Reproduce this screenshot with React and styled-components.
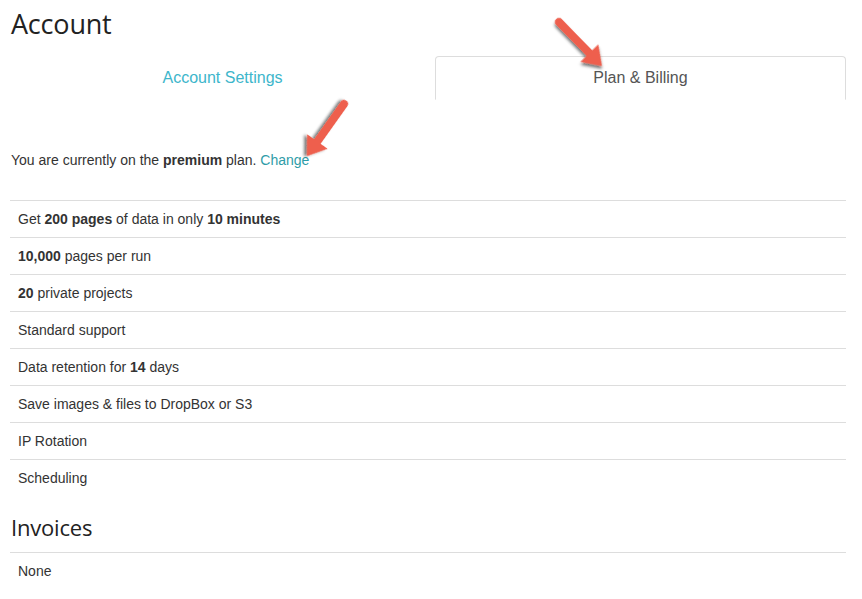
import React from "react";
import styled, { createGlobalStyle } from "styled-components";

const Global = createGlobalStyle`
  html, body { margin: 0; padding: 0; background: #fff; }
  body {
    font-family: "Liberation Sans", Arial, Helvetica, sans-serif;
    font-size: 14px;
    line-height: 20px;
    color: #333;
    position: relative;
  }
`;

const Page = styled.div`
  padding: 0 16px 0 10px;
  width: 836px;
`;

const Title = styled.h1`
  font-family: "Open Sans", "Noto Sans", sans-serif;
  font-weight: 400;
  font-size: 27px;
  line-height: 36px;
  letter-spacing: -0.2px;
  color: #222;
  margin: 6px 0 0 1px;
`;

const Tabs = styled.ul`
  list-style: none;
  margin: 14px 0 0;
  padding: 0;
  display: grid;
  grid-template-columns: 425px 1fr;
  border-bottom: 1px solid #ddd;
`;

const Tab = styled.li`
  margin-bottom: -1px;
`;

const TabLink = styled.a`
  display: block;
  text-align: center;
  font-size: 16px;
  line-height: 22px;
  padding: 10px 15px;
  text-decoration: none;
  border: 1px solid ${(p) => (p.$active ? "#ddd" : "transparent")};
  border-bottom-color: ${(p) => (p.$active ? "#fff" : "transparent")};
  border-radius: 4px 4px 0 0;
  background: #fff;
  color: ${(p) => (p.$active ? "#555" : "#3db6cb")};
  cursor: pointer;
`;

const Intro = styled.p`
  margin: 50px 0 30px 1px;
`;

const Link = styled.a`
  color: #2e9ca8;
  text-decoration: none;
`;

const List = styled.ul`
  list-style: none;
  margin: 0;
  padding: 0;
`;

const Row = styled.li`
  border-top: 1px solid #ddd;
  padding: 8px;
  line-height: 20px;
`;

const SubTitle = styled.h2`
  font-family: "Open Sans", "Noto Sans", sans-serif;
  font-weight: 400;
  font-size: 22px;
  line-height: 26px;
  letter-spacing: -0.2px;
  color: #222;
  margin: 18px 0 12px 1px;
`;

const Overlay = styled.svg`
  position: absolute;
  top: 0;
  left: 0;
  pointer-events: none;
`;

const Arrow = ({ x, y, length, angle }) => (
  <g transform={`translate(${x} ${y}) rotate(${angle})`} filter="url(#arrowShadow)">
    <line x1="0" y1="0" x2={length - 16} y2="0" stroke="#ee5f4d" strokeWidth="8" strokeLinecap="round" />
    <polygon points={`${length},0 ${length - 18},-12.5 ${length - 18},12.5`} fill="#ee5f4d" />
  </g>
);

const features = [
  <>Get <b>200 pages</b> of data in only <b>10 minutes</b></>,
  <><b>10,000</b> pages per run</>,
  <><b>20</b> private projects</>,
  <>Standard support</>,
  <>Data retention for <b>14</b> days</>,
  <>Save images &amp; files to DropBox or S3</>,
  <>IP Rotation</>,
  <>Scheduling</>,
];

export default function App() {
  return (
    <>
      <Global />
      <Page>
        <Title>Account</Title>
        <Tabs>
          <Tab>
            <TabLink>Account Settings</TabLink>
          </Tab>
          <Tab>
            <TabLink $active>Plan &amp; Billing</TabLink>
          </Tab>
        </Tabs>
        <Intro>
          You are currently on the <b>premium</b> plan. <Link>Change</Link>
        </Intro>
        <List>
          {features.map((f, i) => (
            <Row key={i}>{f}</Row>
          ))}
        </List>
        <SubTitle>Invoices</SubTitle>
        <List>
          <Row>None</Row>
        </List>
      </Page>
      <Overlay width="862" height="599" viewBox="0 0 862 599">
        <defs>
          <filter id="arrowShadow" x="-30%" y="-30%" width="160%" height="160%">
            <feDropShadow dx="2" dy="2" stdDeviation="1.6" floodColor="#000" floodOpacity="0.55" />
          </filter>
        </defs>
        <Arrow x={559} y={22} length={61.5} angle={45.7} />
        <Arrow x={344} y={104} length={64} angle={125.4} />
      </Overlay>
    </>
  );
}
